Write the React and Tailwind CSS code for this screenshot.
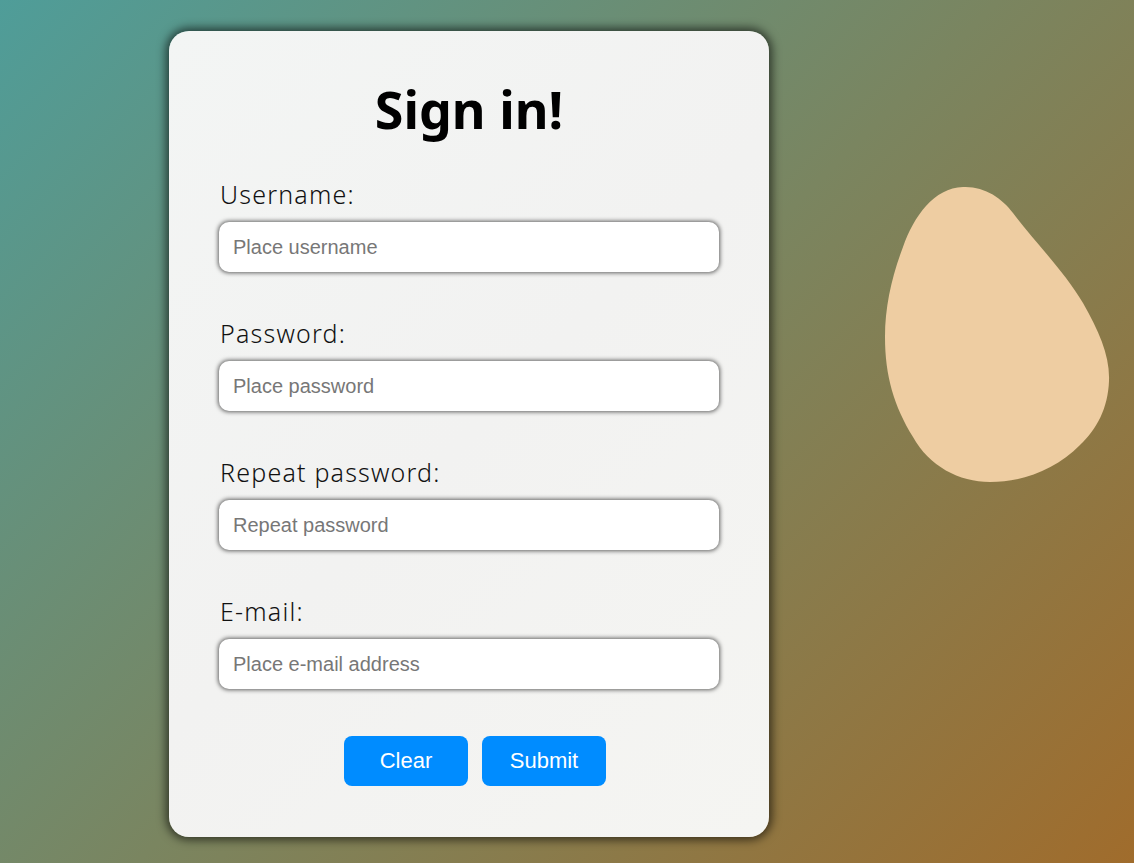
export default function App() {
  const fields = [
    { label: "Username:", ph: "Place username", type: "text" },
    { label: "Password:", ph: "Place password", type: "password" },
    { label: "Repeat password:", ph: "Repeat password", type: "password" },
    { label: "E-mail:", ph: "Place e-mail address", type: "email" },
  ];
  return (
    <div className="min-h-screen w-full bg-[linear-gradient(135deg,#4f9d99_0%,#7a8560_50%,#a06c2c_100%)] flex items-start pl-[169px] pt-[31px] overflow-hidden">
      <div className="w-[600px] h-[806px] shrink-0 rounded-[20px] bg-[linear-gradient(135deg,#f3f5f4_0%,#f2f2f1_50%,#f5f5f2_100%)] shadow-[0_0_10px_3px_rgba(0,0,0,0.6)] px-[50px] pt-[48px] flex flex-col">
        <h1 className="text-center text-[52px] leading-[60px] font-bold text-black" style={{ fontFamily: '"Noto Sans", sans-serif' }}>
          Sign in!
        </h1>
        <div className="mt-[40px] flex flex-col gap-[46px]">
          {fields.map((f) => (
            <div key={f.label} className="flex flex-col">
              <label className="pl-[1px] text-[25px] leading-[30px] font-light tracking-[1.2px] text-[#111]" style={{ fontFamily: '"Noto Sans", sans-serif' }}>
                {f.label}
              </label>
              <input
                type={f.type}
                placeholder={f.ph}
                className="mt-[13px] h-[50px] w-[500px] rounded-[10px] bg-white px-[14px] text-[20px] text-black placeholder:text-[#777] outline-none shadow-[0_0_4px_1px_rgba(0,0,0,0.6)]"
                style={{ fontFamily: '"Liberation Sans", Arial, sans-serif' }}
              />
            </div>
          ))}
        </div>
        <div className="mt-[47px] flex justify-center gap-[14px] pl-[12px]">
          <button className="w-[124px] h-[50px] rounded-[8px] bg-[#008cff] text-white text-[22px] pb-[2px]" style={{ fontFamily: '"Liberation Sans", Arial, sans-serif' }}>
            Clear
          </button>
          <button className="w-[124px] h-[50px] rounded-[8px] bg-[#008cff] text-white text-[22px] pb-[2px]" style={{ fontFamily: '"Liberation Sans", Arial, sans-serif' }}>
            Submit
          </button>
        </div>
      </div>
      <svg className="ml-[115px] mt-[155px] shrink-0" width="227" height="297" viewBox="0 0 227 297">
        <path
          d="M79,1 C100,0 118,12 129,27 C150,55 180,85 199,117 C215,145 226,170 225,195 C224,222 213,243 196,259 C172,283 140,296 106,296 C75,296 45,280 29,251 C10,220 1,190 1,151 C1,120 8,90 19,61 C30,30 50,2 79,1 Z"
          fill="#eecda2"
        />
      </svg>
    </div>
  );
}
